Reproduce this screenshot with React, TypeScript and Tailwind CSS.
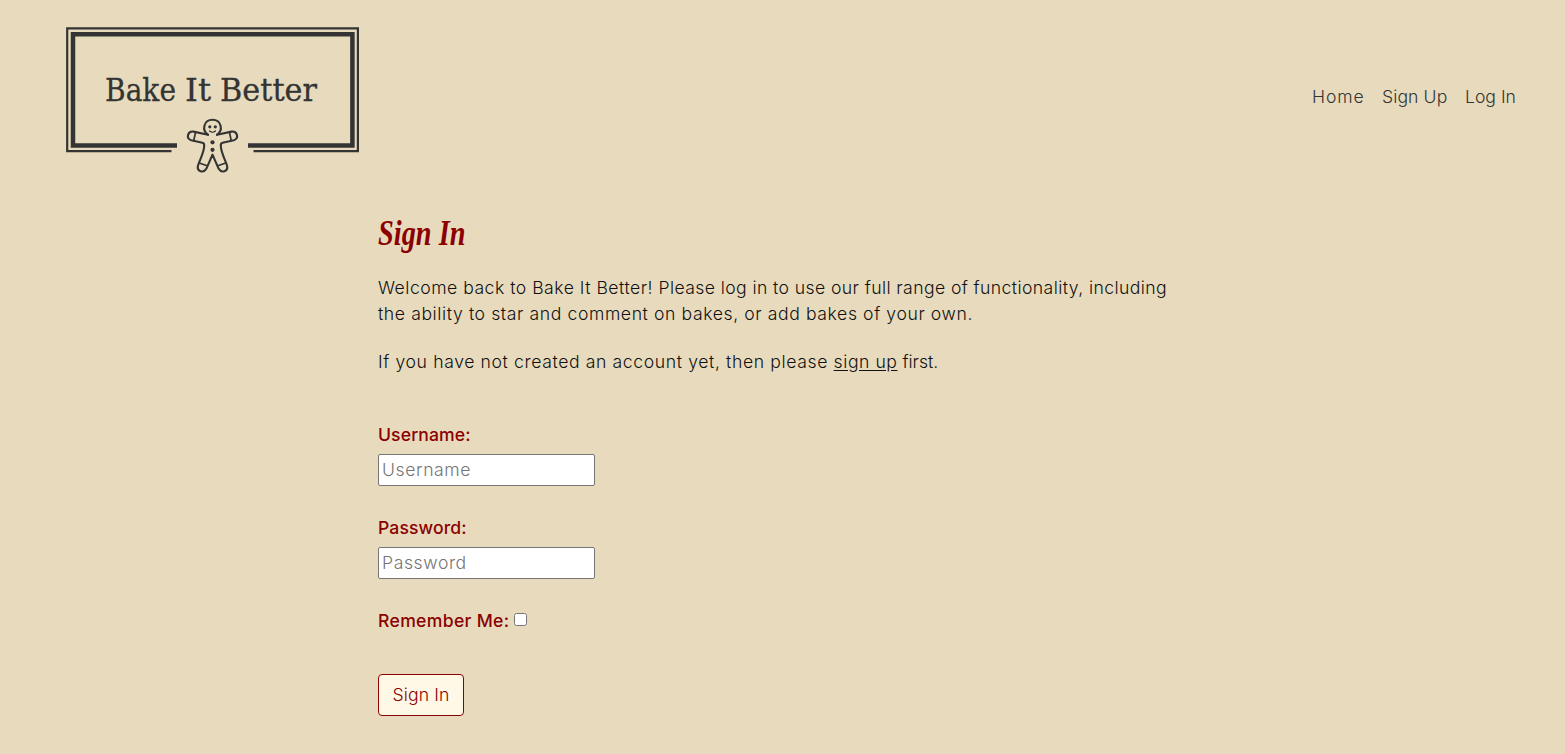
import React from "react";

function Logo() {
  return (
    <svg width="293" height="147" viewBox="66 27 293 147" fill="none" role="img" aria-label="Bake It Better">
      <g stroke="#333433">
        <path d="M171.5 151.1H67.2V28.3H357.9V151.1H253.5" strokeWidth="2.2" />
        <path d="M177 145.4H73V34.2H352.4V145.4H248" strokeWidth="4.5" />
      </g>
      <g fontSize="32" fill="#333433" stroke="#333433" strokeWidth="0.3" fontFamily="'DejaVu Serif', serif">
        <text x="105" y="101" textLength="71" lengthAdjust="spacingAndGlyphs">Bake</text>
        <text x="185" y="101" textLength="26" lengthAdjust="spacingAndGlyphs">It</text>
        <text x="220" y="101" textLength="97" lengthAdjust="spacingAndGlyphs">Better</text>
      </g>
      <g stroke="#333433" strokeWidth="2.1" strokeLinecap="round" strokeLinejoin="round">
        <path d="M208 134.7L193.5 131.6C187.8 130.8 185.5 138.2 191.2 140.2L202.4 142.7Q204.4 143.2 204.2 145.5C204.2 152 200.8 157.5 198 165.5C196.5 171.5 203.5 173.5 206.3 168.8L212.5 154.7L218.7 168.8C221.5 173.5 228.5 171.5 227 165.5C224.2 157.5 220.8 152 220.8 145.5Q220.6 143.2 222.6 142.7L233.8 140.2C239.5 138.2 237.2 130.8 231.5 131.6L217 134.7" />
        <path d="M208 134.7C201.5 130.5 203.5 119.8 212.5 119.8S223.5 130.5 217 134.7" />
        <path d="M195.5 132.3L193.8 140.5M229.5 132.3L231.2 140.5M199.2 163L206.5 165.5M225.8 163L218.5 165.5" strokeWidth="1.7" />
        <path d="M209.5 131Q212.5 133.5 215.5 131" strokeWidth="1.2" />
      </g>
      <g fill="#333433">
        <circle cx="209.8" cy="126.8" r="1.6" />
        <circle cx="215.3" cy="126.8" r="1.6" />
        <circle cx="212.5" cy="142.3" r="2.1" />
        <circle cx="212.5" cy="149.8" r="2.1" />
      </g>
    </svg>
  );
}

function Field({ label, type }: { label: string; type: string }) {
  return (
    <div className="mb-[28px] flex h-[65px] flex-col items-start">
      <label htmlFor={type} className="h-[33px] text-[17.6px] leading-[27px] font-medium tracking-[0.1px] text-[#8b0000]">
        {label}:
      </label>
      <input
        id={type}
        type={type}
        placeholder={label}
        className="h-8 w-[217px] rounded-[2px] border border-[#767676] bg-white px-[3px] pb-[2px] text-[17.6px] font-light placeholder:tracking-[0.6px] placeholder:text-[#757575]"
      />
    </div>
  );
}

export default function App() {
  return (
    <div className="min-h-[754px] bg-[#e8dbbd] font-['Inter','Liberation_Sans',sans-serif] text-[17.6px] font-light text-[#111]">
      <header className="flex h-[200px] items-start justify-between pt-[27px] pr-[49px] pl-[66px]">
        <a href="#">
          <Logo />
        </a>
        <nav className="mt-[57px] flex gap-[18px] leading-[26px] text-[#333433]">
          <a href="#" className="w-[52px] tracking-[0.9px] whitespace-nowrap">Home</a>
          <a href="#" className="w-[65px] tracking-[0.1px] whitespace-nowrap">Sign Up</a>
          <a href="#" className="w-[51px] whitespace-nowrap">Log In</a>
        </nav>
      </header>
      <main className="ml-[378px] w-[809px]">
        <h1 className="h-[75px] origin-left scale-x-[0.81] pt-[14px] font-['Liberation_Serif',serif] text-[35px] leading-[40px] font-bold text-[#8b0000] italic">
          Sign In
        </h1>
        <p className="mb-[22px] leading-[26px] whitespace-nowrap">
          <span className="tracking-[0.5px]">Welcome back to Bake It Better! </span>
          <span className="tracking-[0.41px]">Please log in to use our full range of functionality, including</span>
          <br />
          <span className="tracking-[0.6px]">the ability to star and comment on bakes, or add bakes of your own.</span>
        </p>
        <p className="leading-[26px] whitespace-nowrap">
          <span className="tracking-[0.62px]">If you have not created an account yet, then please </span>
          <a href="#" className="tracking-[0.54px] underline underline-offset-2">sign up</a> first.
        </p>
        <form className="mt-[46px]">
          <Field label="Username" type="text" />
          <Field label="Password" type="password" />
          <div className="flex h-[27px] items-center">
            <label htmlFor="remember" className="w-[136px] pt-[2px] font-medium tracking-[0.32px] whitespace-nowrap text-[#8b0000]">Remember Me:</label>
            <input id="remember" type="checkbox" className="mb-[2px] size-[13px]" />
          </div>
          <button type="button" className="mt-[40px] h-[42px] w-[86px] rounded-[4px] border border-[#8b0000] bg-[#fff8e7] tracking-[0.15px] whitespace-nowrap text-[#8b0000]">
            Sign In
          </button>
        </form>
      </main>
    </div>
  );
}
